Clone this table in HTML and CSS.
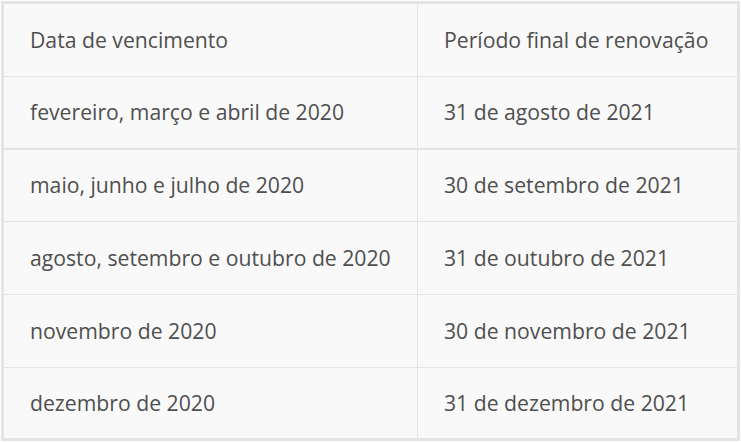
FILE: index.html
```html
<!DOCTYPE html>
<html lang="pt">
<head>
<meta charset="utf-8">
<link rel="stylesheet" href="styles.css">
</head>
<body>
<div class="wrap">
<table class="tbl">
  <colgroup><col class="c1"><col class="c2"></colgroup>
  <tr class="r r-head"><td>Data de vencimento</td><td>Período final de renovação</td></tr>
  <tr class="r r-thick"><td>fevereiro, março e abril de 2020</td><td>31 de agosto de 2021</td></tr>
  <tr class="r r-short"><td>maio, junho e julho de 2020</td><td>30 de setembro de 2021</td></tr>
  <tr class="r"><td>agosto, setembro e outubro de 2020</td><td>31 de outubro de 2021</td></tr>
  <tr class="r"><td>novembro de 2020</td><td>30 de novembro de 2021</td></tr>
  <tr class="r r-last"><td>dezembro de 2020</td><td>31 de dezembro de 2021</td></tr>
</table>
</div>
</body>
</html>
```
FILE: styles.css
```css
html, body { margin: 0; padding: 0; background: #ffffff; }
.wrap { padding: 1px 1px 2px 1px; width: 739px; }
.tbl {
  width: 739px;
  table-layout: fixed;
  border-collapse: separate;
  border-spacing: 0;
  border: 3px solid #e4e4e4;
  background: #f9f9f9;
  font-family: "Open Sans", sans-serif;
  font-size: 21.2px;
  color: #4f4f4f;
}
.c1 { width: 414px; }
.c2 { width: 319px; }
.tbl td {
  padding: 0 0 2px 26px;
  height: 73px;
  vertical-align: middle;
  border-bottom: 1px solid #e4e4e4;
  white-space: nowrap;
  box-sizing: border-box;
}
.tbl td:first-child { border-right: 1px solid #e4e4e4; }
.r-thick td { border-bottom-width: 2px; }
.r-short td { height: 72px; }
.r-last td { border-bottom: none; height: 70px; }
```
